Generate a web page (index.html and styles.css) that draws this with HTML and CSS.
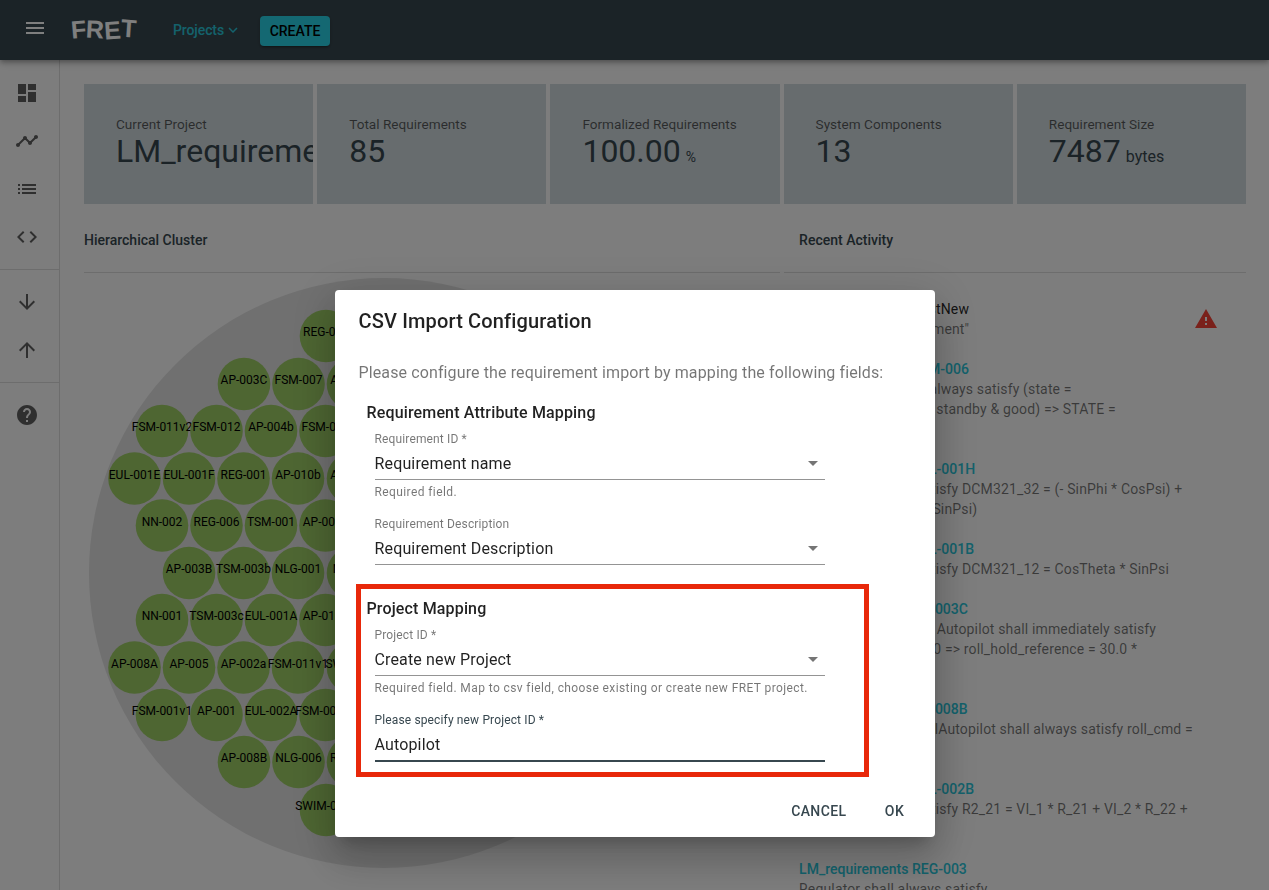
FILE: index.html

```html
<!DOCTYPE html>
<html lang="en">
<head>
  <meta charset="UTF-8">
  <title>FRET</title>
  <link rel="stylesheet" href="styles.css">
</head>
<body>
  <header class="appbar">
    <svg class="icon menu-icon" viewBox="0 0 24 24"><path d="M3 18h18v-2H3v2zm0-5h18v-2H3v2zm0-7v2h18V6H3z"/></svg>
    <div class="logo"><span class="logo-f">F</span><span class="logo-r">R</span><span class="logo-e">E</span><span class="logo-t">T</span></div>
    <div class="projects">Projects
      <svg class="icon chevron" viewBox="0 0 24 24"><path d="M16.59 8.59L12 13.17 7.41 8.59 6 10l6 6 6-6z"/></svg>
    </div>
    <button class="create-btn">CREATE</button>
  </header>

  <div class="layout">
    <nav class="sidebar">
      <div class="nav-group">
        <svg class="icon" viewBox="0 0 24 24"><path d="M3 13h8V3H3v10zm0 8h8v-6H3v6zm10 0h8V11h-8v10zm0-18v6h8V3h-8z"/></svg>
        <svg class="icon" viewBox="0 0 24 24"><path d="M23 8c0 1.1-.9 2-2 2-.18 0-.35-.02-.51-.07l-3.56 3.55c.05.16.07.34.07.52 0 1.1-.9 2-2 2s-2-.9-2-2c0-.18.02-.36.07-.52l-2.55-2.55c-.16.05-.34.07-.52.07s-.36-.02-.52-.07l-4.55 4.56c.05.16.07.33.07.51 0 1.1-.9 2-2 2s-2-.9-2-2 .9-2 2-2c.18 0 .35.02.51.07l4.56-4.55C8.02 9.36 8 9.18 8 9c0-1.1.9-2 2-2s2 .9 2 2c0 .18-.02.36-.07.52l2.55 2.55c.16-.05.34-.07.52-.07s.36.02.52.07l3.55-3.56C19.02 8.35 19 8.18 19 8c0-1.1.9-2 2-2s2 .9 2 2z"/></svg>
        <svg class="icon" viewBox="0 0 24 24"><path d="M3 13h2v-2H3v2zm0 4h2v-2H3v2zm0-8h2V7H3v2zm4 4h14v-2H7v2zm0 4h14v-2H7v2zM7 7v2h14V7H7z"/></svg>
        <svg class="icon" viewBox="0 0 24 24"><path d="M9.4 16.6L4.8 12l4.6-4.6L8 6l-6 6 6 6 1.4-1.4zm5.2 0l4.6-4.6-4.6-4.6L16 6l6 6-6 6-1.4-1.4z"/></svg>
      </div>
      <div class="nav-group">
        <svg class="icon" viewBox="0 0 24 24"><path d="M20 12l-1.41-1.41L13 16.17V4h-2v12.17l-5.58-5.59L4 12l8 8 8-8z"/></svg>
        <svg class="icon" viewBox="0 0 24 24"><path d="M4 12l1.41 1.41L11 7.83V20h2V7.83l5.59 5.58L20 12l-8-8-8 8z"/></svg>
      </div>
      <div class="nav-group nav-last">
        <svg class="icon" viewBox="0 0 24 24"><path d="M12 2C6.48 2 2 6.48 2 12s4.48 10 10 10 10-4.48 10-10S17.52 2 12 2zm1 17h-2v-2h2v2zm2.07-7.75l-.9.92C13.45 12.9 13 13.5 13 15h-2v-.5c0-1.1.45-2.1 1.17-2.83l1.24-1.26c.37-.36.59-.86.59-1.41 0-1.1-.9-2-2-2s-2 .9-2 2H8c0-2.21 1.79-4 4-4s4 1.79 4 4c0 .88-.36 1.68-.93 2.25z"/></svg>
      </div>
    </nav>

    <main class="content">
      <section class="cards">
        <div class="card">
          <div class="card-label">Current Project</div>
          <div class="card-value">LM_requirements</div>
        </div>
        <div class="card">
          <div class="card-label">Total Requirements</div>
          <div class="card-value">85</div>
        </div>
        <div class="card">
          <div class="card-label">Formalized Requirements</div>
          <div class="card-value">100.00<small class="unit-pct">%</small></div>
        </div>
        <div class="card">
          <div class="card-label">System Components</div>
          <div class="card-value">13</div>
        </div>
        <div class="card">
          <div class="card-label">Requirement Size</div>
          <div class="card-value">7487<small class="unit-bytes">bytes</small></div>
        </div>
      </section>

      <section class="panels">
        <div class="panel panel-cluster">
          <h3 class="panel-title">Hierarchical Cluster</h3>
          <svg class="cluster" viewBox="84 273 696 617">
            <circle class="cluster-bg" cx="384" cy="573" r="295"/>
            <g class="node"><circle cx="326" cy="336" r="26.3"/><text x="326" y="336">REG-002</text></g>
            <g class="node"><circle cx="244" cy="384" r="26.3"/><text x="244" y="384">AP-003C</text></g>
            <g class="node"><circle cx="298.500" cy="384" r="26.3"/><text x="298.500" y="384">FSM-007</text></g>
            <g class="node"><circle cx="353" cy="384" r="26.3"/><text x="353" y="384">AP-004a</text></g>
            <g class="node"><circle cx="162" cy="431" r="26.3"/><text x="162" y="431">FSM-011v2</text></g>
            <g class="node"><circle cx="216.500" cy="431" r="26.3"/><text x="216.500" y="431">FSM-012</text></g>
            <g class="node"><circle cx="271" cy="431" r="26.3"/><text x="271" y="431">AP-004b</text></g>
            <g class="node"><circle cx="325.500" cy="431" r="26.3"/><text x="325.500" y="431">FSM-008</text></g>
            <g class="node"><circle cx="134.500" cy="478.500" r="26.3"/><text x="134.500" y="478.500">EUL-001E</text></g>
            <g class="node"><circle cx="189" cy="478.500" r="26.3"/><text x="189" y="478.500">EUL-001F</text></g>
            <g class="node"><circle cx="243.500" cy="478.500" r="26.3"/><text x="243.500" y="478.500">REG-001</text></g>
            <g class="node"><circle cx="298" cy="478.500" r="26.3"/><text x="298" y="478.500">AP-010b</text></g>
            <g class="node"><circle cx="353" cy="478.500" r="26.3"/><text x="353" y="478.500">AP-010a</text></g>
            <g class="node"><circle cx="162" cy="525.500" r="26.3"/><text x="162" y="525.500">NN-002</text></g>
            <g class="node"><circle cx="216.500" cy="525.500" r="26.3"/><text x="216.500" y="525.500">REG-006</text></g>
            <g class="node"><circle cx="271" cy="525.500" r="26.3"/><text x="271" y="525.500">TSM-001</text></g>
            <g class="node"><circle cx="325.500" cy="525.500" r="26.3"/><text x="325.500" y="525.500">AP-006a</text></g>
            <g class="node"><circle cx="189" cy="573" r="26.3"/><text x="189" y="573">AP-003B</text></g>
            <g class="node"><circle cx="243.500" cy="573" r="26.3"/><text x="243.500" y="573">TSM-003b</text></g>
            <g class="node"><circle cx="298" cy="573" r="26.3"/><text x="298" y="573">NLG-001</text></g>
            <g class="node"><circle cx="353" cy="573" r="26.3"/><text x="353" y="573">NN-003</text></g>
            <g class="node"><circle cx="162" cy="620" r="26.3"/><text x="162" y="620">NN-001</text></g>
            <g class="node"><circle cx="216.500" cy="620" r="26.3"/><text x="216.500" y="620">TSM-003c</text></g>
            <g class="node"><circle cx="271" cy="620" r="26.3"/><text x="271" y="620">EUL-001A</text></g>
            <g class="node"><circle cx="325.500" cy="620" r="26.3"/><text x="325.500" y="620">AP-011a</text></g>
            <g class="node"><circle cx="134.500" cy="667.500" r="26.3"/><text x="134.500" y="667.500">AP-008A</text></g>
            <g class="node"><circle cx="189" cy="667.500" r="26.3"/><text x="189" y="667.500">AP-005</text></g>
            <g class="node"><circle cx="243.500" cy="667.500" r="26.3"/><text x="243.500" y="667.500">AP-002a</text></g>
            <g class="node"><circle cx="298" cy="667.500" r="26.3"/><text x="298" y="667.500">FSM-011v1</text></g>
            <g class="node"><circle cx="353" cy="667.500" r="26.3"/><text x="353" y="667.500">SWIM-002</text></g>
            <g class="node"><circle cx="162" cy="715" r="26.3"/><text x="162" y="715">FSM-001v1</text></g>
            <g class="node"><circle cx="216.500" cy="715" r="26.3"/><text x="216.500" y="715">AP-001</text></g>
            <g class="node"><circle cx="271" cy="715" r="26.3"/><text x="271" y="715">EUL-002A</text></g>
            <g class="node"><circle cx="325.500" cy="715" r="26.3"/><text x="325.500" y="715">FSM-001v2</text></g>
            <g class="node"><circle cx="244" cy="762" r="26.3"/><text x="244" y="762">AP-008B</text></g>
            <g class="node"><circle cx="298.500" cy="762" r="26.3"/><text x="298.500" y="762">NLG-006</text></g>
            <g class="node"><circle cx="353" cy="762" r="26.3"/><text x="353" y="762">REG-004</text></g>
            <g class="node"><circle cx="326" cy="810" r="26.3"/><text x="326" y="810">SWIM-001a</text></g>
          </svg>
        </div>

        <div class="panel panel-activity">
          <h3 class="panel-title">Recent Activity</h3>
          <ul class="activity">
            <li class="activity-item">
              <div class="activity-head">LM_requirements TestNew</div>
              <div class="activity-text">Added a test "requirement"</div>
              <svg class="icon warn" viewBox="0 0 24 24"><path d="M1 21h22L12 2 1 21zm12-3h-2v-2h2v2zm0-4h-2v-4h2v4z"/></svg>
            </li>
            <li class="activity-item">
              <div class="activity-link">LM_requirements FSM-006</div>
              <div class="activity-text">FSM_Autopilot shall always satisfy (state =<br>ap_transition_state &amp; standby &amp; good) =&gt; STATE =<br>ap_nominal_state</div>
            </li>
            <li class="activity-item">
              <div class="activity-link">LM_requirements EUL-001H</div>
              <div class="activity-text">Euler shall always satisfy DCM321_32 = (- SinPhi * CosPsi) +<br>(CosPhi * SinTheta * SinPsi)</div>
            </li>
            <li class="activity-item">
              <div class="activity-link">LM_requirements EUL-001B</div>
              <div class="activity-text">Euler shall always satisfy DCM321_12 = CosTheta * SinPsi</div>
            </li>
            <li class="activity-item">
              <div class="activity-link">LM_requirements AP-003C</div>
              <div class="activity-text">when in the roll_hold: Autopilot shall immediately satisfy<br>abs(roll_state) &gt;= 30.0 =&gt; roll_hold_reference = 30.0 *<br>sign(roll)</div>
            </li>
            <li class="activity-item">
              <div class="activity-link">LM_requirements AP-008B</div>
              <div class="activity-text">in the roll_hold_modelAutopilot shall always satisfy roll_cmd =<br>roll_out</div>
            </li>
            <li class="activity-item">
              <div class="activity-link">LM_requirements EUL-002B</div>
              <div class="activity-text">Euler shall always satisfy R2_21 = VI_1 * R_21 + VI_2 * R_22 +<br>VI_3 * R_23</div>
            </li>
            <li class="activity-item">
              <div class="activity-link">LM_requirements REG-003</div>
              <div class="activity-text">Regulator shall always satisfy</div>
            </li>
          </ul>
        </div>
      </section>
    </main>
  </div>

  <div class="overlay">
    <div class="dialog">
      <h2 class="dialog-title">CSV Import Configuration</h2>
      <div class="dialog-content">
        <p class="dialog-text">Please configure the requirement import by mapping the following fields:</p>

        <section class="mapping">
          <h4 class="mapping-title">Requirement Attribute Mapping</h4>
          <div class="field">
            <label class="field-label">Requirement ID *</label>
            <div class="select">Requirement name
              <svg class="icon caret" viewBox="0 0 24 24"><path d="M7 10l5 5 5-5z"/></svg>
            </div>
            <p class="helper">Required field.</p>
          </div>
          <div class="field">
            <label class="field-label">Requirement Description</label>
            <div class="select">Requirement Description
              <svg class="icon caret" viewBox="0 0 24 24"><path d="M7 10l5 5 5-5z"/></svg>
            </div>
          </div>
        </section>

        <section class="mapping mapping-project">
          <div class="highlight"></div>
          <h4 class="mapping-title">Project Mapping</h4>
          <div class="field">
            <label class="field-label">Project ID *</label>
            <div class="select">Create new Project
              <svg class="icon caret" viewBox="0 0 24 24"><path d="M7 10l5 5 5-5z"/></svg>
            </div>
            <p class="helper">Required field. Map to csv field, choose existing or create new FRET project.</p>
          </div>
          <div class="field">
            <label class="field-label label-focused">Please specify new Project ID *</label>
            <div class="select select-focused">Autopilot</div>
          </div>
        </section>
      </div>
      <div class="dialog-actions">
        <button class="text-btn">CANCEL</button>
        <button class="text-btn">OK</button>
      </div>
    </div>
  </div>
</body>
</html>
```

FILE: styles.css

```css
* {
  box-sizing: border-box;
}
html, body {
  height: 100%;
}
body {
  margin: 0;
  overflow: hidden;
  background: #fafafa;
  font-family: Roboto, "Liberation Sans", sans-serif;
  color: #000;
}
.icon {
  width: 24px;
  height: 24px;
  display: block;
  fill: rgba(0,0,0,0.62);
}

/* top bar */
.appbar {
  height: 60px;
  background: #37474f;
  display: flex;
  align-items: center;
  position: relative;
  z-index: 2;
  box-shadow: 0 2px 4px -1px rgba(0,0,0,0.2), 0 4px 5px 0 rgba(0,0,0,0.14), 0 1px 10px 0 rgba(0,0,0,0.12);
}
.menu-icon {
  fill: #fff;
  margin: -4px 0 0 23px;
}
.logo {
  margin: -2px 0 0 24px;
  width: 102px;
  font-family: "Liberation Sans", sans-serif;
  font-size: 25px;
  font-weight: bold;
  color: #fff;
}
.logo span {
  display: inline-block;
}
.logo-f {
  transform: rotate(-5deg);
}
.logo-r {
  transform: rotate(3deg);
}
.logo-e {
  transform: rotate(-4deg) translateY(1px);
}
.logo-t {
  transform: rotate(4deg) translateY(-1px);
}
.projects {
  display: flex;
  align-items: center;
  font-size: 14px;
  font-weight: 500;
  letter-spacing: -0.1px;
  color: #28c4d8;
  width: 87px;
}
.chevron {
  width: 18px;
  height: 18px;
  fill: #28c4d8;
}
.create-btn {
  width: 70px;
  height: 30px;
  margin-top: 2px;
  padding: 0;
  border: 0;
  border-radius: 4px;
  background: #28d0e4;
  color: #000;
  font: 500 14px Roboto, sans-serif;
  box-shadow: 0 3px 1px -2px rgba(0,0,0,0.2), 0 2px 2px 0 rgba(0,0,0,0.14), 0 1px 5px 0 rgba(0,0,0,0.12);
}

/* sidebar + content */
.layout {
  display: flex;
  height: calc(100% - 60px);
}
.sidebar {
  width: 60px;
  flex: none;
  border-right: 1px solid rgba(0,0,0,0.12);
}
.nav-group {
  padding: 21px 15px 20px;
  display: flex;
  flex-direction: column;
  gap: 24px;
  border-bottom: 1px solid rgba(0,0,0,0.12);
}
.nav-group + .nav-group {
  padding: 20px 15px 20px;
}
.nav-last {
  border-bottom: 0;
}
.content {
  flex: 1;
  padding: 24px 23px 0 24px;
  min-width: 0;
}
.cards {
  display: grid;
  grid-template-columns: repeat(5, 1fr);
  gap: 4px;
}
.card {
  height: 120px;
  background: #cfd8dc;
  padding: 32px 0 0 32px;
  overflow: hidden;
  white-space: nowrap;
}
.card-label {
  font-size: 13.6px;
  line-height: 16px;
  color: rgba(0,0,0,0.6);
}
.card-value {
  font-size: 32px;
  line-height: 38px;
  color: #37474f;
}
.card-value small {
  font-size: 14px;
  margin-left: 5px;
}
.card-value .unit-bytes {
  font-size: 16px;
}
.panels {
  display: grid;
  grid-template-columns: repeat(5, 1fr);
  gap: 4px;
}
.panel-cluster {
  grid-column: span 3;
}
.panel-activity {
  grid-column: span 2;
}
.panel-title {
  margin: 0;
  height: 69px;
  padding-top: 28px;
  font-size: 14px;
  line-height: 16px;
  font-weight: 500;
  color: #37474f;
  border-bottom: 1px solid rgba(0,0,0,0.12);
}
.panel-activity .panel-title {
  padding-left: 15.5px;
}
.cluster {
  display: block;
  width: 696px;
  height: 617px;
}
.cluster-bg {
  fill: #e0e0e0;
}
.node circle {
  fill: #9ccc65;
}
.node text {
  font-family: Roboto, sans-serif;
  font-size: 12px;
  text-anchor: middle;
  fill: #000;
}

/* recent activity */
.activity {
  list-style: none;
  margin: 0;
  padding: 26px 0 0 15.5px;
  font-size: 14px;
  line-height: 20px;
}
.activity-item {
  position: relative;
  margin-bottom: 20px;
  white-space: nowrap;
}
.activity-head {
  color: rgba(0,0,0,0.87);
  letter-spacing: 0.15px;
}
.activity-link {
  color: #28c4d8;
  font-weight: 500;
}
.activity-text {
  color: rgba(0,0,0,0.54);
  letter-spacing: 0.15px;
}
.warn {
  position: absolute;
  top: 8px;
  left: 395px;
  fill: #f44336;
}

/* dialog */
.overlay {
  position: fixed;
  inset: 0;
  z-index: 5;
  background: rgba(0,0,0,0.5);
  display: flex;
  justify-content: center;
  align-items: flex-start;
  padding-top: 290px;
}
.dialog {
  width: 600px;
  background: #fff;
  border-radius: 4px;
  box-shadow: 0 11px 15px -7px rgba(0,0,0,0.2), 0 24px 38px 3px rgba(0,0,0,0.14), 0 9px 46px 8px rgba(0,0,0,0.12);
}
.dialog-title {
  margin: 0;
  padding: 15px 24px;
  font-size: 20px;
  line-height: 32px;
  font-weight: 500;
  letter-spacing: 0.15px;
  color: rgba(0,0,0,0.87);
}
.dialog-content {
  padding: 9px 24px 31px;
}
.dialog-text {
  margin: 0 0 16px;
  font-size: 16px;
  line-height: 24px;
  letter-spacing: 0.12px;
  color: rgba(0,0,0,0.54);
}
.mapping {
  padding: 0 8px;
}
.mapping-project {
  position: relative;
  margin-top: 32px;
}
.mapping-title {
  margin: 0 0 6px;
  font-size: 16px;
  line-height: 24px;
  font-weight: 500;
  letter-spacing: 0.15px;
  color: rgba(0,0,0,0.87);
}
.highlight {
  position: absolute;
  top: -13px;
  bottom: -15px;
  left: -3px;
  right: 42px;
  border: 5px solid #e8280a;
  pointer-events: none;
}
.field {
  margin-left: 8px;
  width: 450px;
}
.field + .field {
  margin-top: 17px;
}
.field-label {
  display: block;
  font-size: 12px;
  line-height: 16px;
  letter-spacing: 0.14px;
  color: rgba(0,0,0,0.54);
}
.label-focused {
  color: #37474f;
}
.select {
  display: flex;
  justify-content: space-between;
  align-items: center;
  height: 33px;
  font-size: 16px;
  letter-spacing: 0.15px;
  color: rgba(0,0,0,0.87);
  border-bottom: 1px solid rgba(0,0,0,0.42);
}
.select-focused {
  height: 34px;
  border-bottom: 2px solid #37474f;
}
.caret {
  fill: rgba(0,0,0,0.54);
}
.helper {
  margin: 5px 0 0;
  font-size: 12px;
  line-height: 14px;
  letter-spacing: 0.4px;
  color: rgba(0,0,0,0.54);
}
.dialog-actions {
  display: flex;
  justify-content: flex-end;
  gap: 8px;
  padding: 0 8px 8px;
}
.text-btn {
  min-width: 64px;
  height: 36px;
  padding: 0 8px;
  border: 0;
  background: none;
  font: 500 14px Roboto, sans-serif;
  letter-spacing: 0.4px;
  color: #37474f;
}
```
